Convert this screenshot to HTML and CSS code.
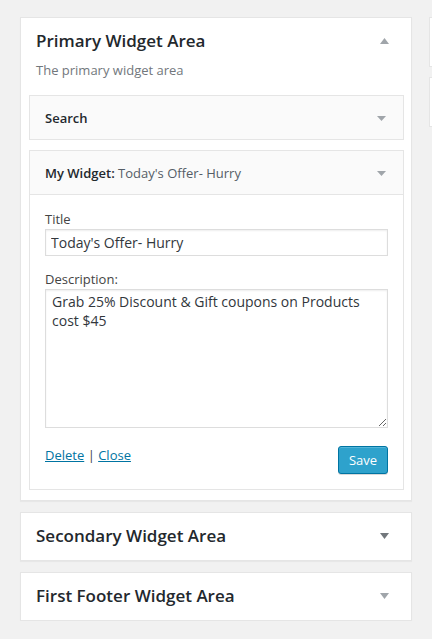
FILE: index.html
```html
<!DOCTYPE html>
<html>
<head>
<meta charset="utf-8">
<link rel="stylesheet" href="styles.css">
</head>
<body>
<div class="page">
  <div class="main-col">
    <div class="area">
      <div class="area-head">
        <h3 class="area-title">Primary Widget Area</h3>
        <svg class="arrow" width="9" height="6" viewBox="0 0 9 6"><path d="M0 6 L4.5 0 L9 6 Z" fill="#a0a5aa"/></svg>
      </div>
      <p class="area-desc">The primary widget area</p>
      <div class="widget">
        <div class="widget-top">
          <span class="widget-title">Search</span>
          <svg class="warrow" width="9" height="5" viewBox="0 0 9 5"><path d="M0 0 L9 0 L4.5 5 Z" fill="#a0a5aa"/></svg>
        </div>
      </div>
      <div class="widget open">
        <div class="widget-top">
          <span class="widget-title">My Widget: <span class="in-title">Today's Offer- Hurry</span></span>
          <svg class="warrow" width="9" height="5" viewBox="0 0 9 5"><path d="M0 0 L9 0 L4.5 5 Z" fill="#a0a5aa"/></svg>
        </div>
        <div class="widget-inside">
          <label class="field-label">Title</label>
          <input class="text-input" type="text" value="Today's Offer- Hurry">
          <label class="field-label second">Description:</label>
          <textarea class="text-area">Grab 25% Discount &amp; Gift coupons on Products cost $45</textarea>
          <div class="actions">
            <div class="links"><a href="#">Delete</a> | <a href="#">Close</a></div>
            <button class="save">Save</button>
          </div>
        </div>
      </div>
    </div>
    <div class="area closed">
      <div class="area-head">
        <h3 class="area-title">Secondary Widget Area</h3>
        <svg class="arrow" width="9" height="6" viewBox="0 0 9 6"><path d="M0 0 L9 0 L4.5 6 Z" fill="#72777c"/></svg>
      </div>
    </div>
    <div class="area closed">
      <div class="area-head">
        <h3 class="area-title">First Footer Widget Area</h3>
        <svg class="arrow" width="9" height="6" viewBox="0 0 9 6"><path d="M0 0 L9 0 L4.5 6 Z" fill="#a0a5aa"/></svg>
      </div>
    </div>
  </div>
  <div class="side-col">
    <div class="side-box"></div>
    <div class="side-box"></div>
  </div>
</div>
</body>
</html>
```
FILE: styles.css
```css
html, body {
  margin: 0;
  padding: 0;
  background: #f1f1f1;
  font-family: "Open Sans", "Liberation Sans", sans-serif;
  color: #23282d;
  overflow: hidden;
}
.page {
  display: flex;
  gap: 17px;
  padding: 17px 0 0 20px;
  width: 432px;
  box-sizing: border-box;
  overflow: hidden;
}
.main-col {
  width: 392px;
  display: flex;
  flex-direction: column;
  gap: 11px;
  flex: none;
}
.side-col {
  width: 100px;
  display: flex;
  flex-direction: column;
  gap: 10px;
  flex: none;
}
.side-box {
  background: #fff;
  border: 1px solid #e5e5e5;
  box-sizing: border-box;
  height: 50px;
}
.area {
  background: #fff;
  border: 1px solid #e5e5e5;
  box-shadow: 0 1px 1px rgba(0,0,0,.04);
}
.area-head {
  display: flex;
  justify-content: space-between;
  align-items: center;
  padding: 13px 22px 0 15px;
}
.area.closed .area-head {
  padding-bottom: 14px;
}
.area-title {
  margin: 0;
  font-size: 17px;
  font-weight: 600;
  line-height: 20px;
  color: #23282d;
}
.area-desc {
  margin: 10px 15px 16px;
  font-size: 13px;
  line-height: 18px;
  color: #72777c;
}
.widget {
  margin: 0 7px 10px 8px;
  border: 1px solid #e5e5e5;
  background: #fafafa;
}
.widget-top {
  display: flex;
  justify-content: space-between;
  align-items: center;
  height: 43px;
  padding: 0 17px 0 15px;
}
.widget.open .widget-top {
  border-bottom: 1px solid #e5e5e5;
}
.widget-title {
  font-size: 13px;
  font-weight: 600;
  color: #23282d;
}
.in-title {
  font-weight: 400;
  color: #555d66;
}
.warrow {
  margin-top: 1px;
}
.widget-inside {
  background: #fff;
  padding: 15px 15px 15px;
  display: flex;
  flex-direction: column;
}
.field-label {
  font-size: 13px;
  line-height: 18px;
  color: #444;
  margin-bottom: 1px;
}
.field-label.second {
  margin-top: 14px;
}
.text-input {
  box-sizing: border-box;
  width: 100%;
  height: 27px;
  border: 1px solid #ddd;
  box-shadow: inset 0 1px 2px rgba(0,0,0,.07);
  padding: 2px 5px;
  font-family: "Open Sans", "Liberation Sans", sans-serif;
  font-size: 14px;
  color: #32373c;
  margin: 0;
  outline: none;
}
.text-area {
  display: block;
  box-sizing: border-box;
  width: 100%;
  height: 139px;
  border: 1px solid #ddd;
  box-shadow: inset 0 1px 2px rgba(0,0,0,.07);
  padding: 2px 6px;
  font-family: "Open Sans", "Liberation Sans", sans-serif;
  font-size: 14px;
  line-height: 19px;
  color: #32373c;
  margin: 0;
  outline: none;
  resize: vertical;
}
.actions {
  display: flex;
  justify-content: space-between;
  align-items: flex-start;
  margin-top: 18px;
}
.links {
  font-size: 13px;
  line-height: 18px;
  color: #444;
}
.links a {
  color: #0074a2;
  text-decoration: underline;
}
.save {
  box-sizing: border-box;
  width: 50px;
  height: 28px;
  background: #2ea2cc;
  border: 1px solid #0074a2;
  border-radius: 3px;
  box-shadow: inset 0 1px 0 rgba(120,200,230,.5), 0 1px 0 rgba(0,0,0,.15);
  color: #fff;
  font-family: "Open Sans", "Liberation Sans", sans-serif;
  font-size: 13px;
  padding: 0;
  margin: 0;
}
```
